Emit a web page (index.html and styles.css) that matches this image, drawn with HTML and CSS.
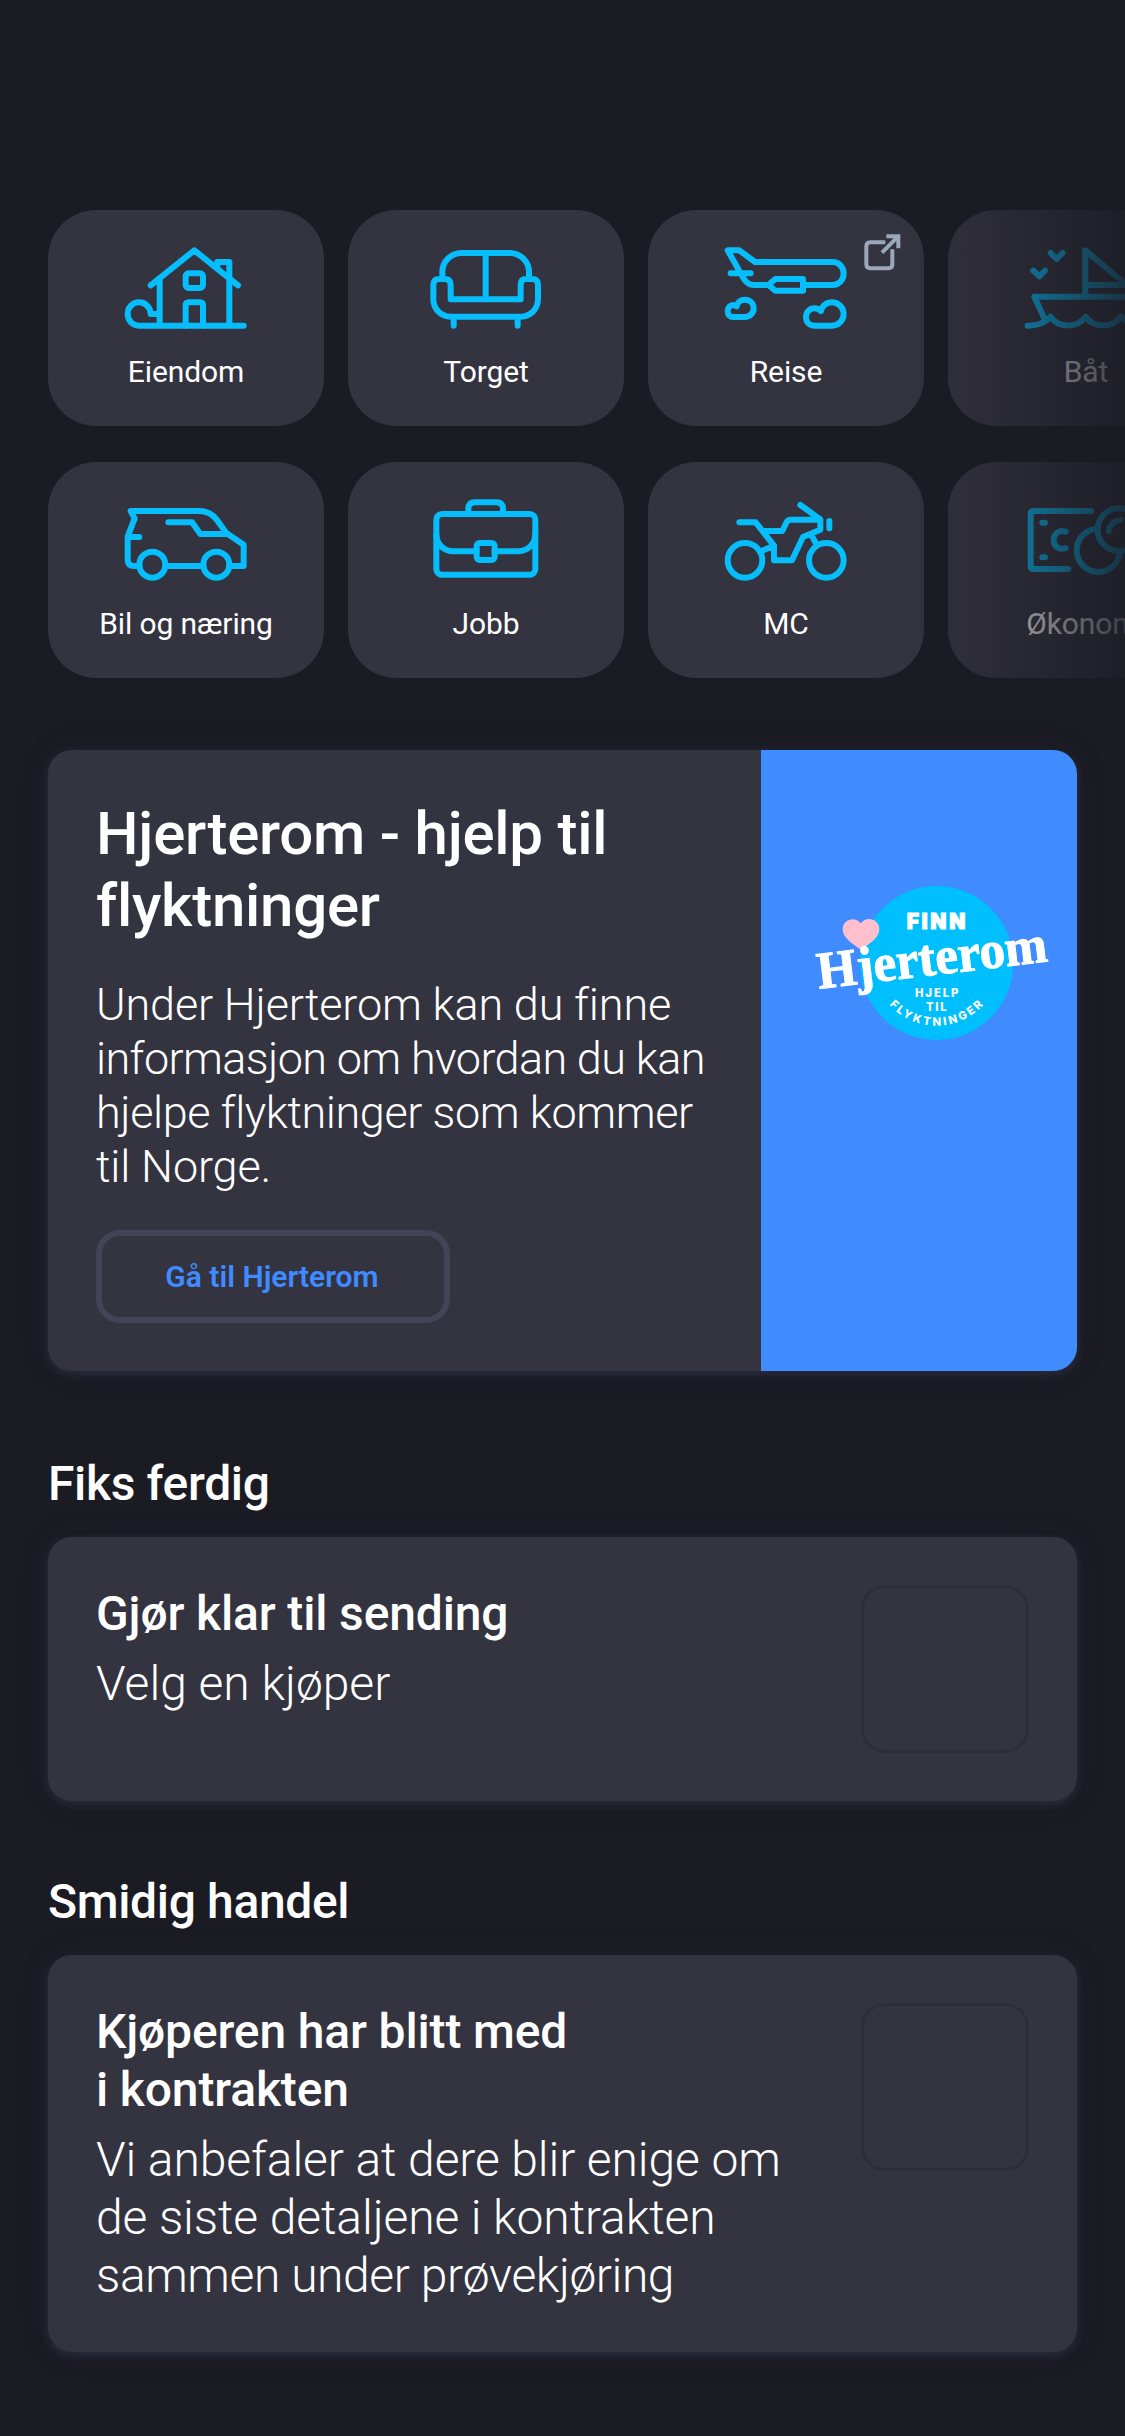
FILE: index.html
```
<!DOCTYPE html>
<html lang="nb">
<head>
<meta charset="utf-8">
<title>FINN</title>
<link rel="stylesheet" href="styles.css">
</head>
<body>
<main class="page">
  <nav class="markets">
    <a class="tile">
      <svg class="icon" viewBox="238 132 400 270">
        <path d="M333 256L464 151L595 256M533 205V186H569V377M360 240V377M612 377H298C277 377 264 360 264 342C264 322 279 307 298 307C318 307 333 323 333 342H356"/>
        <rect x="438" y="220" width="52" height="44" rx="9"/>
        <path d="M438 377V316Q438 307 447 307H481Q490 307 490 316V377"/>
      </svg>
      <span class="label">Eiendom</span>
    </a>
    <a class="tile">
      <svg class="icon" viewBox="238 132 400 270">
        <path d="M308 237V216C308 185 333 159 366 159H510C543 159 568 185 568 216V237M438 159V298M333 298H543V255Q543 237 559 237H577Q595 237 595 255V298C595 327 572 350 543 350H333C304 350 281 327 281 298V255Q281 237 299 237H315Q333 237 333 255ZM342 350V377M534 350V377"/>
      </svg>
      <span class="label">Torget</span>
    </a>
    <a class="tile">
      <svg class="icon" viewBox="238 132 400 270">
        <path d="M386 255H343C327 255 318 246 311 234L264 151H299L346 186H578C598 186 612 201 612 220C612 240 598 255 578 255H490M273 220H333M386 255L407 237H490V272H407Z"/>
        <path d="M280 351C271 351 264 344 264 333S272 315 282 315L291 319C293 307 303 299 316 299C331 299 342 311 342 325S331 351 316 351Z"/>
        <path d="M524 377C509 377 499 366 499 351S510 325 524 325Q535 325 544 333C546 318 560 307 577 307C597 307 612 323 612 342S597 377 577 377Z"/>
      </svg>
      <svg class="external" viewBox="668 98 116 116">
        <path d="M735 126H690Q678 126 678 138V192Q678 204 690 204H744Q756 204 756 192V147M725 157L770 112"/>
        <path class="head" d="M738 102H780V144H768V121L761 114H738Z"/>
      </svg>
      <span class="label">Reise</span>
    </a>
    <a class="tile">
      <svg class="icon" viewBox="283 132 400 270">
        <path d="M378 159L396 177L414 159M326 212L344 229L361 212M482 290V151L606 255H482M361 359L329 290H640L606 350M309 377C340 377 360 370 378 350C400 385 460 385 483 350C505 385 565 385 588 350C610 370 630 377 657 377"/>
      </svg>
      <span class="label">Båt</span>
    </a>
    <a class="tile">
      <svg class="icon" viewBox="238 138 400 270">
        <path d="M299 348H285Q264 348 264 330V260L285 205L273 183H478C503 183 519 192 532 210L560 249L612 284V348H569M385 348H491M264 261H299M386 217H457L482 252H562"/>
        <circle cx="338" cy="344" r="39"/>
        <circle cx="530" cy="344" r="39"/>
      </svg>
      <span class="label">Bil og næring</span>
    </a>
    <a class="tile">
      <svg class="icon" viewBox="238 138 400 270">
        <rect x="290" y="192" width="297" height="182" rx="17"/>
        <path d="M386 190V177Q386 157 406 157H470Q490 157 490 177V190M290 253C290 282 312 304 341 304H411M465 304H535C564 304 587 282 587 253"/>
        <rect x="411" y="279" width="54" height="51" rx="9"/>
      </svg>
      <span class="label">Jobb</span>
    </a>
    <a class="tile">
      <svg class="icon" viewBox="238 138 400 270">
        <circle cx="316" cy="331" r="52"/>
        <circle cx="560" cy="331" r="52"/>
        <path d="M299 217H348L403 287V331H457L490 261L542 239V208L482 165M542 209H452Q445 209 441 216L428 243H369M403 287L361 305M514 253L530 282M569 213V235"/>
      </svg>
      <span class="label">MC</span>
    </a>
    <a class="tile">
      <svg class="icon" viewBox="283 888 400 270">
        <path d="M500 933H327Q318 933 318 942V1098Q318 1107 327 1107H431M353 968H361M353 1072H361M423 995C404 988 387 1001 387 1020S404 1051 423 1044M552 994Q557 965 588 959"/>
        <circle cx="583" cy="989" r="64"/>
        <path d="M516 986A65 65 0 1 0 586 1056"/>
      </svg>
      <span class="label">Økonomi</span>
    </a>
  </nav>

  <article class="card promo">
    <div class="promo-text">
      <h1 class="promo-title">Hjerterom - hjelp til<br>flyktninger</h1>
      <p class="promo-body">Under Hjerterom kan du finne<br><span class="tight">informasjon om hvordan du kan</span><br><span class="snug">hjelpe flyktninger som kommer</span><br>til Norge.</p>
      <a class="button">Gå til Hjerterom</a>
    </div>
    <div class="promo-media">
      <svg class="logo" viewBox="70 60 730 490">
        <defs><path id="arc" d="M250 307A190 190 0 0 0 630 307"/></defs>
        <ellipse class="disc" cx="441" cy="309" rx="230" ry="231"/>
        <path class="heart" d="M213 269C185 250 159 232 159 208C159 178 196 167 213 190C231 166 269 177 269 208C269 232 243 251 213 269Z"/>
        <text class="sans wordmark" x="351" y="208" font-size="63" textLength="176">FINN</text>
        <text class="serif" x="88" y="386" font-size="158" textLength="694" lengthAdjust="spacingAndGlyphs" transform="rotate(-6.8 88 386)">Hjerterom</text>
        <text class="sans" x="376" y="411" font-size="34" textLength="130">HJELP</text>
        <text class="sans" x="409" y="453" font-size="34" textLength="62">TIL</text>
        <text class="sans" font-size="34" textLength="318"><textPath href="#arc" startOffset="139" textLength="318">FLYKTNINGER</textPath></text>
      </svg>
    </div>
  </article>

  <section class="section first">
    <h2 class="heading">Fiks ferdig</h2>
    <article class="card task">
      <div class="task-text">
        <h3 class="task-title">Gjør klar til sending</h3>
        <p class="task-body short">Velg en kjøper</p>
      </div>
      <div class="thumb"></div>
    </article>
  </section>

  <section class="section">
    <h2 class="heading">Smidig handel</h2>
    <article class="card task tall">
      <div class="task-text">
        <h3 class="task-title">Kjøperen har blitt med<br>i kontrakten</h3>
        <p class="task-body">Vi anbefaler at dere blir enige om<br>de siste detaljene i kontrakten<br><span class="snug">sammen under prøvekjøring</span></p>
      </div>
      <div class="thumb"></div>
    </article>
  </section>
</main>
</body>
</html>
```
FILE: styles.css
```
* { box-sizing: border-box; }

body {
  margin: 0;
  background: #1b1b24;
  color: #fff;
  font-family: Roboto, "Liberation Sans", sans-serif;
}

h1, h2, h3, p { margin: 0; }

.page {
  position: relative;
  height: 2436px;
  padding: 210px 48px 0;
  overflow: hidden;
}

.markets {
  display: grid;
  grid-template-columns: repeat(4, 276px);
  gap: 36px 24px;
}

.markets::after {
  content: "";
  position: absolute;
  top: 200px;
  right: 0;
  width: 225px;
  height: 490px;
  background: linear-gradient(to right, rgba(27, 27, 36, 0), rgba(27, 27, 36, .85));
}

.tile {
  position: relative;
  display: flex;
  flex-direction: column;
  align-items: center;
  height: 216px;
  padding-top: 34px;
  border-radius: 48px;
  background: #343340;
}

.icon {
  width: 133.33px;
  height: 90px;
  fill: none;
  stroke: #06befb;
  stroke-width: 18;
  stroke-linecap: round;
  stroke-linejoin: round;
}

.label {
  margin-top: 20px;
  font-size: 30px;
  line-height: 36px;
  letter-spacing: -.1px;
}

.external {
  position: absolute;
  top: 22.67px;
  right: 22.67px;
  width: 38.67px;
  height: 38.67px;
  fill: none;
  stroke: #9ba8ba;
  stroke-width: 12;
}

.external .head { fill: #9ba8ba; stroke: none; }

.card {
  display: flex;
  border-radius: 24px;
  background: #343340;
  box-shadow: 0 3px 9px rgba(62, 74, 100, .38), 0 0 30px rgba(62, 66, 90, .12);
}

.promo {
  height: 621px;
  margin-top: 72px;
  overflow: hidden;
}

.promo-text {
  flex: 1;
  padding: 48px 0 0 48px;
}

.promo-title {
  font-size: 60px;
  font-weight: 500;
  line-height: 72px;
  letter-spacing: -.25px;
}

.promo-body {
  margin-top: 36px;
  font-size: 45px;
  font-weight: 300;
  line-height: 54px;
  letter-spacing: -.15px;
}

.tight { letter-spacing: -.62px; }
.snug { letter-spacing: -.42px; }

.button {
  display: flex;
  align-items: center;
  justify-content: center;
  width: 354px;
  height: 93px;
  margin-top: 36px;
  padding-right: 2px;
  border: 6px solid #444358;
  border-radius: 24px;
  color: #3f8bff;
  font-size: 30px;
  font-weight: 600;
}

.promo-media {
  display: flex;
  align-items: flex-start;
  width: 316px;
  padding: 130px 0 0 52.33px;
  background: #3f8bff;
}

.logo {
  width: 243.33px;
  height: 163.33px;
  overflow: visible;
}

.disc { fill: #00bfff; }
.heart { fill: #ffbfcd; }

.sans {
  fill: #fff;
  font-family: Inter, sans-serif;
  font-weight: 800;
}

.wordmark {
  font-weight: 900;
  stroke: #fff;
  stroke-width: 3;
}

.serif {
  fill: #fff;
  stroke: #fff;
  stroke-width: 3;
  font-family: "Liberation Serif", serif;
  font-weight: 700;
}

.section { margin-top: 72px; }
.first { margin-top: 84px; }

.heading {
  font-size: 48px;
  font-weight: 500;
  line-height: 58px;
  letter-spacing: -.35px;
}

.task {
  justify-content: space-between;
  align-items: flex-start;
  margin-top: 24px;
  padding: 48px;
}

.tall { height: 397px; }

.task-title {
  font-size: 48px;
  font-weight: 500;
  line-height: 58px;
  letter-spacing: -.15px;
}

.task-body {
  margin-top: 12px;
  font-size: 48px;
  font-weight: 300;
  line-height: 58px;
  letter-spacing: -.1px;
}

.short { letter-spacing: 0; }

.thumb {
  width: 168px;
  height: 168px;
  border: 3px solid #2f2d3a;
  border-radius: 24px;
}
```
